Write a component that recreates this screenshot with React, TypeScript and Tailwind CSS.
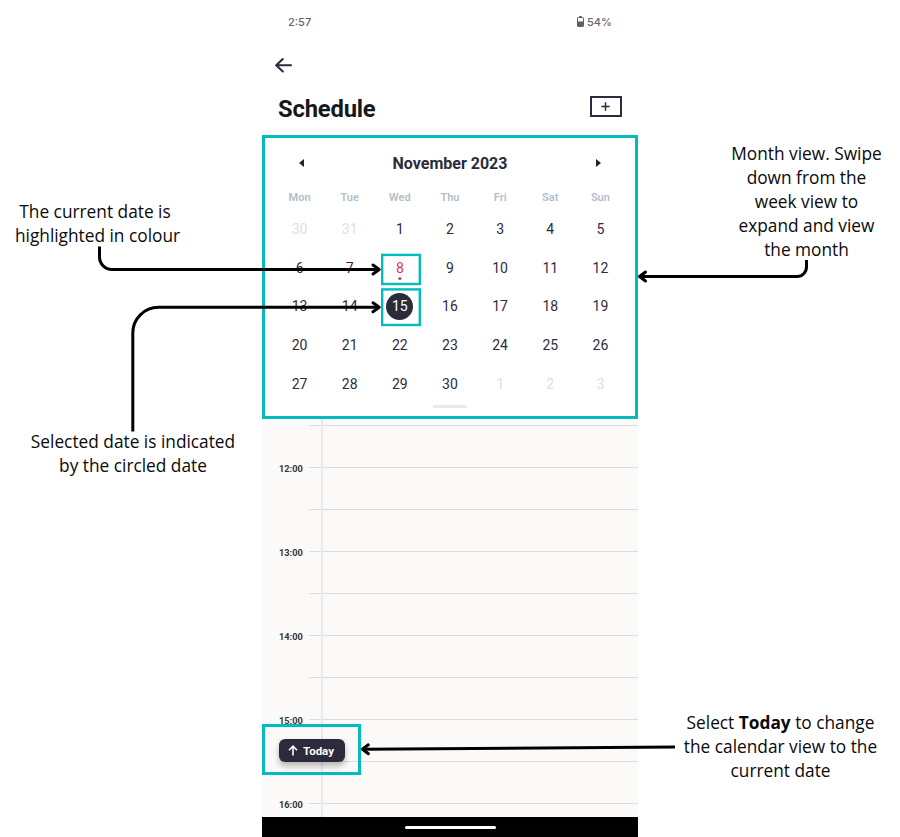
import React from "react";

const weekdays = ["Mon", "Tue", "Wed", "Thu", "Fri", "Sat", "Sun"];

const days: { n: number; out?: boolean }[] = [
  { n: 30, out: true },
  { n: 31, out: true },
  ...Array.from({ length: 30 }, (_, i) => ({ n: i + 1 })),
  { n: 1, out: true },
  { n: 2, out: true },
  { n: 3, out: true },
];

const slots = ["", "12:00", "", "13:00", "", "14:00", "", "15:00", "", "16:00"];

function StatusBar() {
  return (
    <div className="flex h-[42px] items-center justify-between pl-[26px] pr-[26px] font-[Inter,sans-serif] text-[11px] font-medium text-[#666]">
      <span className="pt-px">2:57</span>
      <span className="flex items-center gap-[3px]">
        <svg width="7" height="11" viewBox="0 0 7 11">
          <path d="M2.2 0h2.6v1.3h-2.6z" fill="#5f5f5f" />
          <rect x="0.5" y="1.5" width="6" height="9" rx="0.8" fill="#fff" stroke="#5f5f5f" />
          <path d="M0.5 5.5h6v5h-6z" fill="#5f5f5f" />
        </svg>
        <span className="pt-px">54%</span>
      </span>
    </div>
  );
}

function Header() {
  return (
    <>
      <div className="flex h-[46px] items-center pl-[13px]">
        <svg width="18" height="16" viewBox="0 0 18 16" fill="none" stroke="#2b2b3d" strokeWidth="2.1" strokeLinecap="round" strokeLinejoin="round">
          <path d="M16 8.3H1.2M7.8 2.1L1.2 8.3l6.6 6.2" />
        </svg>
      </div>
      <div className="flex h-[47px] items-start justify-between pl-4 pr-4">
        <h1 className="pt-[5px] text-[23.8px] font-bold leading-[32px] tracking-[-0.2px] text-[#17181c]">Schedule</h1>
        <div className="mt-[8px] flex h-[21px] w-8 items-center justify-center border-2 border-[#2b2b3d] pr-px">
          <svg width="9" height="9" viewBox="0 0 9 9" stroke="#2b2b3d" strokeWidth="1.5">
            <path d="M4.5 0.3v8.4M0.3 4.5h8.4" />
          </svg>
        </div>
      </div>
    </>
  );
}

function Day({ n, out, index }: { n: number; out?: boolean; index: number }) {
  if (index === 9) {
    return (
      <div className="flex items-center justify-center">
        <span className="relative text-[#d9375c]">
          {n}
          <i className="absolute left-1/2 top-[21px] size-[3.4px] -translate-x-1/2 rounded-full bg-[#d9375c]" />
        </span>
      </div>
    );
  }
  if (index === 16) {
    return (
      <div className="flex items-center justify-center">
        <span className="flex size-[27px] items-center justify-center rounded-full bg-[#2c2b3c] text-white">{n}</span>
      </div>
    );
  }
  return <div className={"flex items-center justify-center " + (out ? "text-[#dbe0e8]" : "text-[#2d2c3d]")}>{n}</div>;
}

function Calendar() {
  return (
    <section className="flex h-[284px] flex-col items-center border-[3px] border-[#04bbbf] bg-white">
      <div className="flex h-[50px] w-full items-center justify-between pl-[34px] pr-[34px]">
        <svg width="5" height="8" viewBox="0 0 5 8"><path d="M5 0v8L0 4z" fill="#22222f" /></svg>
        <h2 className="pt-[2px] text-[16px] font-bold text-[#2b2b3a]">November 2023</h2>
        <svg width="5" height="8" viewBox="0 0 5 8"><path d="M0 0v8l5-4z" fill="#22222f" /></svg>
      </div>
      <div className="grid h-[22px] w-[351px] grid-cols-7 items-start text-center text-[11px] leading-[17px] font-semibold text-[#b3becb]">
        {weekdays.map((d) => (
          <span key={d} className="pt-px">{d}</span>
        ))}
      </div>
      <div className="grid h-[193px] w-[351px] grid-cols-7 grid-rows-5 text-[14px]">
        {days.map((d, i) => (
          <Day key={i} n={d.n} out={d.out} index={i} />
        ))}
      </div>
      <div className="mt-[2px] h-[3px] w-[34px] rounded-full bg-[#e7e9ee]" />
    </section>
  );
}

function Timeline() {
  return (
    <section className="relative h-[398px] overflow-hidden bg-[#fbfaf8] pt-[6px]">
      <div className="absolute inset-y-0 left-[59px] w-[2px] bg-[#e9e9e9]" />
      {slots.map((label, i) => (
        <div key={i} className="flex h-[42px] items-start">
          <span className="-mt-[6px] w-[47px] pl-[17px] text-[9.2px] font-bold leading-[16px] text-[#33333f]">{label}</span>
          <div className="h-px flex-1 bg-[#dcdcdc]" />
        </div>
      ))}
      <button className="absolute left-[17px] top-[320px] flex h-[23px] w-[66px] items-center gap-[6px] rounded-[6px] bg-[#2c2b3c] pl-[9px] text-[11.5px] font-bold text-white shadow-[0_4px_6px_rgba(0,0,0,0.28)]">
        <svg width="10" height="11" viewBox="0 0 10 11" fill="none" stroke="#fff" strokeWidth="1.6">
          <path d="M5 10.6V1.2M1 5.2l4-4 4 4" />
        </svg>
        <span className="-ml-px pt-px">Today</span>
      </button>
    </section>
  );
}

function Annotations() {
  return (
    <>
      <svg className="pointer-events-none absolute inset-0" width="900" height="837" viewBox="0 0 900 837" fill="none" stroke="#000" strokeWidth="3">
        <path d="M99.5 246.5V257a12.5 12.5 0 0 0 12.5 12.5H379" />
        <path d="M132.8 431.5V333a25.7 25.7 0 0 1 25.7-25.7H379" />
        <path d="M806.5 260V267a9.5 9.5 0 0 1-9.5 9.5H640" />
        <path d="M675 747L363 749.3" />
        <g strokeLinecap="round" strokeLinejoin="round">
          <path d="M373 265l6.2 4.5-6.2 4.5" />
          <path d="M373 302.8l6.2 4.5-6.2 4.5" />
          <path d="M645.5 272l-6 4.5 6 4.5" />
          <path d="M368.3 744.8l-5.8 4.5 5.9 4.4" />
        </g>
        <g stroke="#04bbbf" strokeWidth="2.4">
          <rect x="382.2" y="254.9" width="37.6" height="29.1" />
          <rect x="382.2" y="289.4" width="37.6" height="35.6" />
        </g>
      </svg>
      <div className="absolute left-[262px] top-[724px] h-[51px] w-[99px] border-[3px] border-[#04bbbf]" />
    </>
  );
}

export default function App() {
  return (
    <div className="relative flex h-[837px] w-[900px] overflow-hidden bg-white font-['Open_Sans',sans-serif] text-[17.3px] leading-[24px] text-[#0a0a0a]">
      <aside className="flex w-[262px] flex-col pt-[200px] text-center">
        <p className="pr-[67px]">
          <span className="block pr-[5px]">The current date is</span>
          <span className="block">highlighted in colour</span>
        </p>
        <p className="mt-[182px] pl-[4px]">
          Selected date is indicated
          <br />
          by the circled date
        </p>
      </aside>
      <main className="flex w-[376px] flex-col font-[Roboto,sans-serif]">
        <StatusBar />
        <Header />
        <Calendar />
        <Timeline />
        <footer className="flex h-[20px] items-center justify-center bg-black">
          <div className="h-[3px] w-[91px] rounded-full bg-white" />
        </footer>
      </main>
      <aside className="flex w-[262px] flex-col pt-[142px] text-center">
        <p className="pl-[75px]">
          Month view. Swipe
          <br />
          down from the
          <br />
          week view to
          <br />
          expand and view
          <br />
          the month
        </p>
        <p className="mt-[449px] pl-[23px]">
          Select <b className="font-bold">Today</b> to change
          <br />
          the calendar view to the
          <br />
          current date
        </p>
      </aside>
      <Annotations />
    </div>
  );
}
